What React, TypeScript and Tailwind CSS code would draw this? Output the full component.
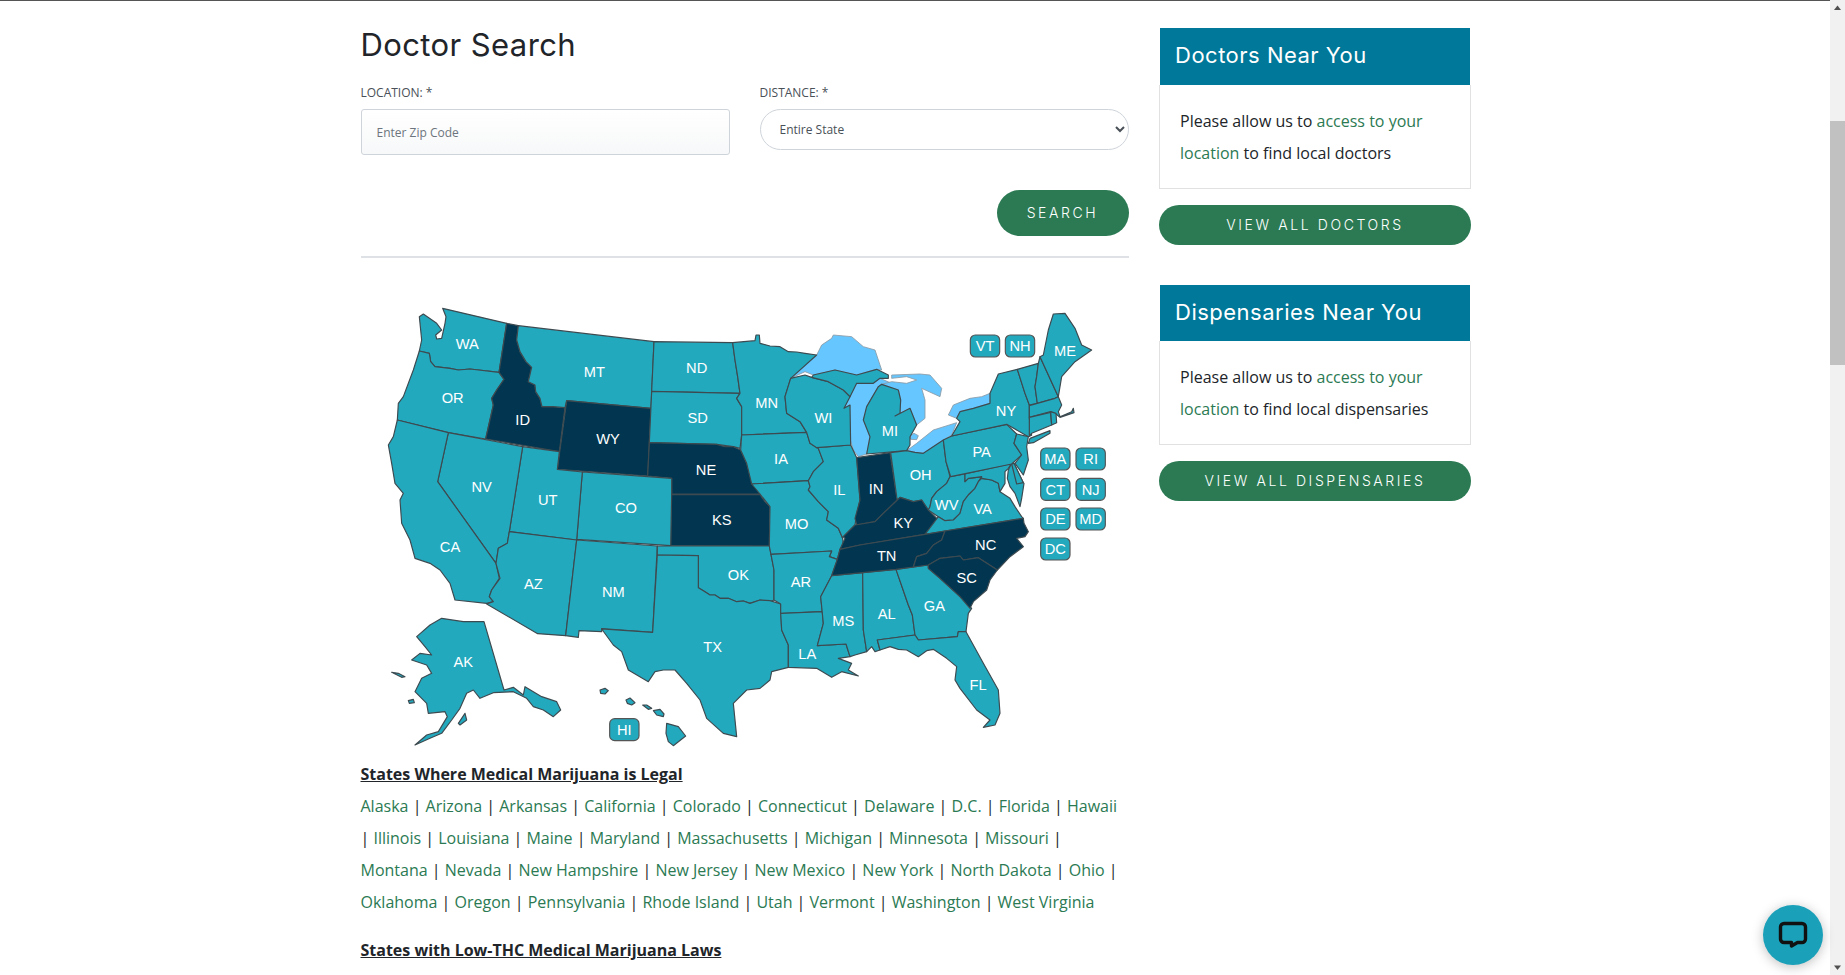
import React from 'react';

const heading = "font-['Inter',sans-serif]";

// map coordinates are 3x page pixels, origin at the top left of the svg
const blue = '#23a9be';
const dark = '#023650';

const lakes = [
  '1262,265 1300,225 1340,195 1355,165 1385,145 1390,135 1445,140 1480,170 1515,180 1535,240 1520,238 1460,255 1395,240 1330,255 1305,245',
  '1440,320 1460,280 1530,265 1565,280 1535,283 1525,290 1490,350 1480,390 1500,440 1490,492 1465,500 1450,480 1432,420 1440,345 1422,355',
  '1565,255 1650,252 1680,255 1715,295 1710,320 1655,295 1665,330 1665,385 1640,405 1620,355 1575,378 1590,370 1592,330 1585,300 1535,283 1565,275 1610,280 1640,270 1610,260 1565,265',
  '1610,482 1640,460 1690,420 1760,398 1745,435 1720,450 1660,490 1635,487',
  '1735,375 1750,345 1800,325 1835,320 1860,310 1860,340 1810,355 1770,365 1760,385',
  '1621,437 1632,430 1645,437 1640,449 1622,448',
];

const states: { pts: string; dark?: boolean }[] = [
  { pts: '218,55 410,100 387,247 300,237 265,240 240,235 195,230 182,215 178,190 148,183 155,150 148,80 160,72 200,100 215,120 197,135 200,147 215,145 225,100 228,80' },
  { pts: '148,183 178,190 182,215 195,230 240,235 265,240 300,237 387,247 402,268 380,300 365,325 370,345 347,447 235,428 82,390 85,340 100,320 130,240' },
  { pts: '410,100 445,107 440,150 450,185 468,215 485,232 475,275 495,285 497,305 510,325 516,350 550,350 585,353 568,485 347,447 370,345 365,325 380,300 402,268 387,247', dark: true },
  { pts: '445,107 852,155 843,355 590,332 585,353 550,350 516,350 510,325 497,305 495,285 475,275 485,232 468,215 450,185 440,150' },
  { pts: '590,332 843,355 833,558 562,538', dark: true },
  { pts: '852,155 1088,158 1095,210 1103,260 1110,310 845,304' },
  { pts: '845,304 1110,310 1100,325 1115,350 1115,435 1110,475 1090,470 1040,463 838,458' },
  { pts: '838,458 1040,463 1065,470 1090,470 1112,480 1130,520 1145,570 1170,612 905,612 905,565 833,558', dark: true },
  { pts: '903,614 1170,614 1185,635 1200,650 1198,768 902,767', dark: true },
  { pts: '637,546 905,565 905,612 902,767 620,748' },
  { pts: '458,470 568,485 562,538 637,546 620,750 418,725' },
  { pts: '235,428 458,470 418,725 412,760 385,775 378,820 203,575' },
  { pts: '82,390 235,428 203,575 378,820 388,865 365,900 358,920 370,935 350,940 255,930 240,880 210,840 180,820 135,805 120,750 95,700 90,630 100,610 75,580 65,520 55,465 70,440' },
  { pts: '418,725 620,750 587,1037 503,1031 350,942 370,935 358,920 365,900 390,865 378,820 385,775 412,760' },
  { pts: '620,750 862,768 848,1027 695,1016 695,1025 627,1022 625,1042 587,1037' },
  { pts: '862,768 1198,768 1203,793 1212,840 1212,930 1200,935 1170,930 1140,940 1120,933 1100,935 1075,925 1050,925 1035,915 1020,915 1000,902 985,893 985,797 862,795' },
  { pts: '862,795 985,797 985,893 1000,902 1020,915 1035,915 1050,925 1075,925 1100,935 1120,933 1140,940 1170,930 1200,932 1232,942 1235,1020 1255,1065 1255,1132 1205,1145 1200,1170 1170,1195 1130,1200 1090,1240 1100,1340 1060,1330 1010,1285 990,1230 950,1180 915,1140 880,1140 855,1145 835,1175 775,1140 755,1085 730,1065 695,1017 848,1027' },
  { pts: '1088,158 1155,152 1158,135 1168,135 1170,160 1200,168 1230,170 1255,185 1280,186 1305,190 1340,195 1262,265 1245,320 1250,370 1290,395 1310,427 1115,435 1115,350 1100,325 1110,310 1103,260 1095,210' },
  { pts: '1115,435 1310,427 1320,460 1345,475 1360,515 1330,545 1315,572 1145,582 1130,520 1112,480' },
  { pts: '1145,582 1315,572 1320,590 1315,600 1345,635 1375,665 1370,690 1405,715 1418,745 1420,765 1410,778 1402,808 1378,800 1385,783 1203,793 1198,768 1200,650 1170,612' },
  { pts: '1203,793 1385,783 1378,800 1402,808 1385,857 1352,920 1357,965 1232,971 1232,942 1212,930 1212,840' },
  { pts: '1232,970 1357,965 1360,1000 1342,1067 1428,1062 1440,1100 1405,1105 1445,1120 1435,1140 1465,1158 1415,1145 1385,1162 1340,1135 1255,1132 1255,1065 1235,1020' },
  { pts: '1385,857 1478,848 1480,1020 1490,1085 1455,1095 1440,1100 1428,1062 1342,1067 1360,1000 1352,920' },
  { pts: '1478,848 1578,838 1615,945 1627,975 1635,1035 1522,1050 1530,1080 1515,1085 1505,1070 1490,1085 1480,1020' },
  { pts: '1578,838 1675,825 1675,835 1710,865 1770,920 1805,955 1795,970 1788,1025 1765,1025 1762,1040 1645,1050 1635,1035 1627,975 1615,945' },
  { pts: '1522,1050 1635,1035 1645,1050 1762,1040 1765,1025 1788,1025 1840,1120 1885,1200 1890,1270 1875,1305 1840,1312 1860,1290 1820,1260 1770,1195 1755,1170 1760,1130 1730,1105 1690,1078 1670,1082 1645,1100 1610,1080 1585,1078 1560,1070 1530,1080' },
  { pts: '1340,473 1442,465 1460,503 1470,630 1458,685 1455,705 1420,740 1418,745 1405,715 1370,690 1375,665 1345,635 1315,600 1320,590 1315,572 1330,545 1360,515 1345,475' },
  { pts: '1262,265 1305,255 1325,262 1375,275 1420,300 1440,320 1422,355 1440,345 1442,465 1340,473 1320,460 1310,427 1290,395 1250,370 1245,320' },
  { pts: '1325,262 1330,255 1395,240 1460,255 1520,238 1555,255 1555,265 1530,265 1510,280 1460,280 1440,320 1420,300 1375,275' },
  { pts: '1480,390 1490,350 1525,290 1535,283 1585,300 1592,330 1590,370 1575,378 1620,355 1640,405 1620,440 1620,465 1610,482 1490,492 1500,440' },
  { pts: '1460,503 1560,488 1580,620 1582,630 1540,670 1515,695 1460,705 1455,685 1470,630', dark: true },
  { pts: '1562,488 1610,482 1635,487 1660,490 1720,450 1728,515 1740,560 1730,580 1700,605 1685,625 1680,650 1675,660 1655,630 1630,635 1590,622 1582,630 1580,620' },
  { pts: '1420,740 1455,705 1515,695 1540,670 1582,630 1590,622 1630,635 1655,630 1675,660 1705,690 1665,733 1470,765 1410,778 1425,745', dark: true },
  { pts: '1675,660 1680,650 1685,625 1700,605 1730,580 1740,560 1785,552 1785,575 1795,565 1820,562 1835,560 1825,575 1815,595 1795,615 1780,635 1770,670 1750,690 1725,692 1705,680' },
  { pts: '1665,733 1705,680 1725,692 1750,690 1770,670 1780,635 1795,615 1815,595 1825,575 1835,565 1865,570 1885,580 1890,605 1920,625 1935,650 1955,680 1960,685' },
  { pts: '1785,552 1925,520 1915,535 1905,545 1905,580 1890,605 1885,580 1865,570 1835,565 1835,560 1820,562 1795,565 1785,575' },
  { pts: '1915,540 1925,520 1932,520 1960,578 1962,580 1955,625 1950,650 1935,610 1920,590 1912,565' },
  { pts: '1925,522 1932,520 1960,578 1940,582' },
  { pts: '1410,778 1470,765 1665,733 1725,723 1715,750 1690,765 1670,790 1640,800 1630,831 1578,838 1478,848 1385,857 1402,808', dark: true },
  { pts: '1725,723 1960,685 1962,700 1975,725 1965,740 1940,745 1960,770 1920,800 1882,840 1825,803 1780,810 1770,798 1710,805 1675,825 1630,831 1640,800 1670,790 1690,765 1715,750', dark: true },
  { pts: '1675,835 1675,825 1710,805 1770,798 1780,810 1825,803 1882,840 1860,870 1850,900 1810,935 1800,955 1770,920 1710,865', dark: true },
  { pts: '1720,450 1745,438 1910,403 1940,432 1932,460 1955,495 1925,522 1742,560 1728,515' },
  { pts: '1745,438 1770,395 1760,385 1770,365 1810,355 1860,340 1860,310 1885,252 1942,238 1965,310 1978,345 1978,385 1985,436 1975,440 1910,403' },
  { pts: '1940,432 1975,440 1970,470 1975,510 1960,555 1935,520 1955,495 1932,460' },
  { pts: '1975,460 1980,445 2040,422 2040,430 1990,458' },
  { pts: '1942,238 2005,220 2000,260 1995,290 2002,340 1978,345 1965,310' },
  { pts: '2005,220 2010,200 2065,320 2055,325 2002,340 1995,290 2000,260' },
  { pts: '2010,200 2020,195 2035,120 2050,72 2085,70 2115,115 2135,165 2165,180 2115,215 2075,260 2065,320' },
  { pts: '1978,347 2055,325 2065,320 2075,345 2065,365 2070,380 2105,365 2110,355 2112,368 2070,382 2058,372 2042,365 1978,382' },
  { pts: '1978,382 2042,367 2045,405 1985,430 1978,438' },
  { pts: '2042,365 2058,370 2060,398 2045,405' },
  { pts: '342,995 402,1200 430,1192 460,1215 465,1190 515,1220 560,1235 572,1260 550,1280 520,1260 490,1250 470,1225 430,1205 370,1208 330,1225 310,1200 290,1210 270,1255 245,1290 215,1330 180,1345 135,1365 170,1335 205,1325 232,1280 225,1265 175,1270 170,1240 135,1205 155,1165 185,1150 170,1125 125,1110 150,1090 185,1095 165,1070 140,1040 180,1005 215,985 280,995' },
  { pts: '65,1147 85,1150 105,1160 95,1162' },
  { pts: '115,1232 130,1228 133,1238 118,1240' },
  { pts: '265,1300 285,1270 290,1290 270,1305' },
  { pts: '690,1200 705,1195 715,1202 705,1212 692,1210' },
  { pts: '768,1230 780,1224 795,1238 785,1245 772,1240' },
  { pts: '818,1245 830,1245 845,1255 835,1258' },
  { pts: '850,1262 870,1258 882,1272 880,1280 860,1275' },
  { pts: '890,1300 925,1310 947,1338 910,1367 895,1355 888,1330' },
];

const labels: [string, number, number][] = [
  ['WA', 292, 160], ['OR', 248, 322], ['ID', 458, 388], ['WY', 714, 445], ['MT', 673, 244], ['ND', 980, 232], ['SD', 983, 382], ['NE', 1008, 538],
  ['NV', 335, 590], ['UT', 533, 628], ['CO', 768, 652], ['KS', 1055, 690], ['CA', 240, 770], ['AZ', 490, 882], ['NM', 730, 905], ['OK', 1105, 854],
  ['TX', 1028, 1070], ['AK', 280, 1115], ['MN', 1190, 338], ['WI', 1360, 382], ['IA', 1233, 505], ['MI', 1560, 422], ['IL', 1408, 600], ['IN', 1518, 596],
  ['OH', 1652, 553], ['PA', 1835, 484], ['NY', 1908, 362], ['ME', 2085, 182], ['MO', 1280, 700], ['KY', 1600, 697], ['WV', 1730, 645], ['VA', 1838, 655],
  ['NC', 1847, 765], ['TN', 1550, 797], ['SC', 1790, 863], ['AR', 1293, 875], ['MS', 1420, 992], ['AL', 1550, 972], ['GA', 1693, 947], ['LA', 1312, 1090],
  ['FL', 1824, 1183],
];

const badges: [string, number, number][] = [
  ['VT', 1845, 168], ['NH', 1950, 168], ['MA', 2056, 507], ['RI', 2162, 507], ['CT', 2056, 598], ['NJ', 2162, 598], ['DE', 2056, 687], ['MD', 2162, 687], ['DC', 2056, 777], ['HI', 763, 1319],
];

const legalStates = ['Alaska', 'Arizona', 'Arkansas', 'California', 'Colorado', 'Connecticut', 'Delaware', 'D.C.', 'Florida', 'Hawaii', 'Illinois', 'Louisiana', 'Maine', 'Maryland', 'Massachusetts', 'Michigan', 'Minnesota', 'Missouri', 'Montana', 'Nevada', 'New Hampshire', 'New Jersey', 'New Mexico', 'New York', 'North Dakota', 'Ohio', 'Oklahoma', 'Oregon', 'Pennsylvania', 'Rhode Island', 'Utah', 'Vermont', 'Washington', 'West Virginia'];

const UsMap = () => (
  <svg viewBox="0 0 2250 1404" className="ml-[9.5px] mt-[32px] block h-[468px] w-[750px] font-['Liberation_Sans',sans-serif]">
    {lakes.map((pts) => (
      <polygon key={pts} points={pts} fill="#66c6ff" stroke="#8a9aa5" strokeWidth="2.5" strokeLinejoin="round" />
    ))}
    {states.map((s) => (
      <polygon key={s.pts} points={s.pts} fill={s.dark ? dark : blue} stroke="#3d4a50" strokeWidth="3.5" strokeLinejoin="round" />
    ))}
    {labels.map(([name, x, y]) => (
      <text key={name} x={x} y={y + 16} textAnchor="middle" fontSize="44" fill="#fff">{name}</text>
    ))}
    {badges.map(([name, x, y]) => (
      <g key={name}>
        <rect x={x - 44} y={y - 33} width="88" height="66" rx="15" fill={blue} stroke="#555" strokeWidth="3.5" />
        <text x={x} y={y + 16} textAnchor="middle" fontSize="44" fill="#fff">{name}</text>
      </g>
    ))}
  </svg>
);

const NearYou = ({ title, what, button }: { title: string; what: string; button: string }) => (
  <div className="mb-[40px]">
    <div className="mx-px flex h-[56.4px] items-center bg-[#007899] pl-[15px]">
      <h3 className={`${heading} pb-[1px] text-[22px] font-normal tracking-[0.5px] text-white`}>{title}</h3>
    </div>
    <div className="h-[104.4px] border border-t-0 border-[#e1e1e1] px-5 pt-5 text-base leading-8 text-[#212529]">
      Please allow us to <a className="text-[#2b7a53]">access to your location</a> to find local {what}
    </div>
    <button className={`${heading} mt-[15.6px] flex h-10 w-full items-center justify-center rounded-full bg-[#2b7a53] text-sm font-light tracking-[2.6px] text-white`}>{button}</button>
  </div>
);

export default function App() {
  return (
    <div className="relative flex h-screen overflow-hidden bg-white font-['Open_Sans',sans-serif] text-[#212529]">
      <main className="flex min-w-0 flex-1 gap-[30.5px] border-t border-[#555] pl-[360.5px]">
        <div className="w-[768px] shrink-0">
          <h1 className={`${heading} mt-[26px] text-[31px] leading-9 font-normal tracking-[0.4px] text-[#212529]`}>Doctor Search</h1>
          <div className="mt-[21px] grid grid-cols-[369px_369px] gap-x-[30px]">
            <div>
              <label className="block text-xs leading-[18px] text-[#495057]">LOCATION: *</label>
              <input placeholder="Enter Zip Code" className="mt-[7px] block h-[46px] w-full rounded-[3px] border border-[#ced4da] bg-gradient-to-b from-white to-[#f7f8f9] px-[15px] text-xs text-[#495057] placeholder:text-[#6c757d]" />
            </div>
            <div>
              <label className="block text-xs leading-[18px] text-[#495057]">DISTANCE: *</label>
              <select className="mt-[7px] block h-[41px] w-full rounded-full border border-[#ced4da] bg-white px-[15px] text-xs text-[#495057]">
                <option>Entire State</option>
              </select>
            </div>
          </div>
          <div className="mt-[35px] flex justify-end">
            <button className={`${heading} h-[46px] w-[132px] rounded-full bg-[#2b7a53] text-sm font-light tracking-[2.6px] text-white`}>SEARCH</button>
          </div>
          <hr className="mt-[20px] border-t-2 border-[#dee2e6]" />
          <UsMap />
          <div className="text-base leading-8">
            <p className="font-bold underline">States Where Medical Marijuana is Legal</p>
            <p>
              {legalStates.map((s, i) => (
                <React.Fragment key={s}>
                  <a className="text-[#2b7a53]">{s}</a>
                  {i < legalStates.length - 1 ? ' | ' : ''}
                </React.Fragment>
              ))}
            </p>
            <p className="mt-4 font-bold underline">States with Low-THC Medical Marijuana Laws</p>
          </div>
        </div>
        <aside className="w-[312px] shrink-0 pt-[27.2px]">
          <NearYou title="Doctors Near You" what="doctors" button="VIEW ALL DOCTORS" />
          <NearYou title="Dispensaries Near You" what="dispensaries" button="VIEW ALL DISPENSARIES" />
        </aside>
      </main>

      <div className="flex w-[15px] shrink-0 flex-col items-center bg-[#f1f1f1]">
        <svg viewBox="0 0 15 15" className="h-[15px] w-[15px] shrink-0"><path d="M7.5 5.5 L11 10 L4 10 Z" fill="#505050" /></svg>
        <div className="mt-[106px] h-[244px] w-full bg-[#c1c1c1]" />
        <svg viewBox="0 0 15 15" className="mt-auto h-[15px] w-[15px] shrink-0"><path d="M4 5.5 L11 5.5 L7.5 10 Z" fill="#505050" /></svg>
      </div>

      <div className="absolute right-[22px] bottom-[10px] flex h-[60px] w-[60px] items-center justify-center rounded-full bg-[#1aa0b9] shadow-[0_2px_12px_rgba(0,0,0,0.25)]">
        <svg viewBox="0 0 32 32" className="h-8 w-8">
          <path d="M7 4.5h18a3.5 3.5 0 0 1 3.5 3.5v12a3.5 3.5 0 0 1-3.5 3.5h-4.5l-6 3.5v-3.5H7a3.5 3.5 0 0 1-3.5-3.5V8A3.5 3.5 0 0 1 7 4.5Z" fill="none" stroke="#111" strokeWidth="3.4" strokeLinejoin="round" />
        </svg>
      </div>
    </div>
  );
}
